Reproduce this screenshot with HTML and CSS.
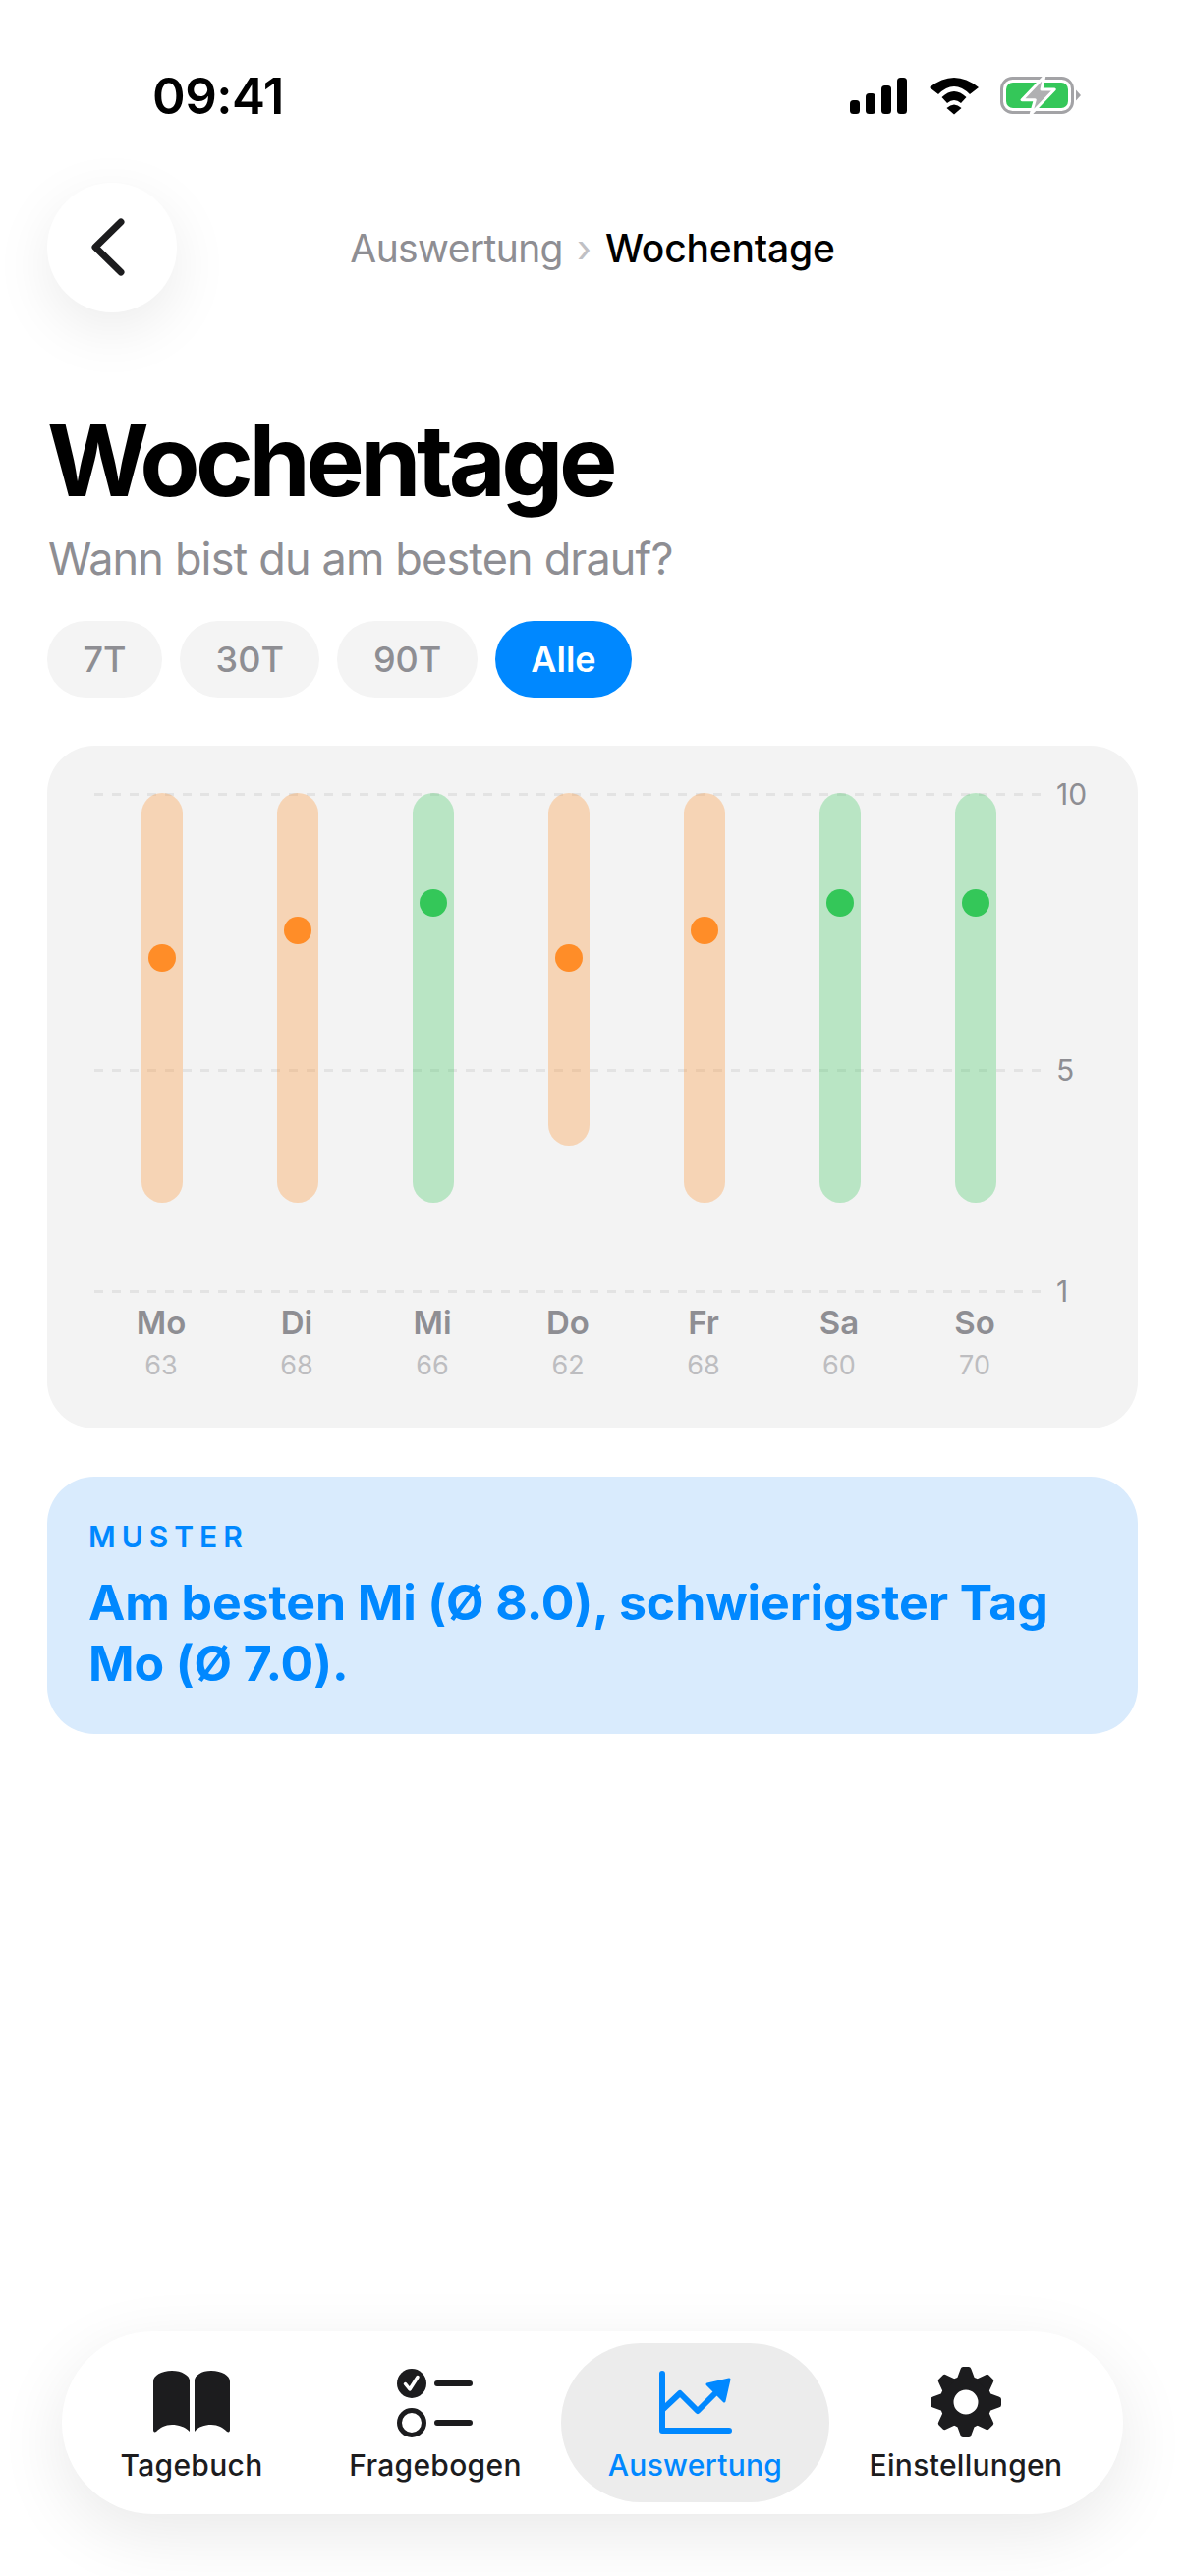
FILE: index.html
```html
<!DOCTYPE html>
<html lang="de">
<head>
    <meta charset="UTF-8">
    <meta name="viewport" content="width=device-width, initial-scale=1.0">
    <title>Wochentage</title>
    <link rel="stylesheet" href="styles.css">
</head>
<body>

<div class="status-bar">
    <span class="status-time">09:41</span>
    <div class="status-icons">
        <svg class="icon-signal" width="58" height="37" viewBox="0 0 58 37">
            <rect x="0" y="23" width="10" height="14" rx="3.5"/>
            <rect x="16" y="16" width="10" height="21" rx="3.5"/>
            <rect x="32" y="8" width="10" height="29" rx="3.5"/>
            <rect x="48" y="0" width="10" height="37" rx="3.5"/>
        </svg>
        <svg class="icon-wifi" width="50" height="38" viewBox="0 0 50 38">
            <path d="M0 10Q25 -10 50 10L41 17Q25 1 9 17Z"/>
            <path d="M12.5 20Q25 8 37.5 20L32 26Q25 20 18 26Z"/>
            <path d="M17.5 31Q25 24 32.5 31L25 37.5Z"/>
        </svg>
        <svg class="icon-battery" width="86" height="44" viewBox="0 0 86 44">
            <rect x="3.5" y="4.5" width="72" height="35" rx="11" fill="none" stroke="#a3a3a6" stroke-width="3"/>
            <rect x="8" y="9" width="63" height="26" rx="7" fill="#34c759"/>
            <path d="M79 16.5L84 22L79 27.5Z" fill="#a3a3a6"/>
            <path d="M46.7 3L24 26.7H37.3L33.3 41L57.3 16H44Z" fill="#b0b0b2" stroke="#fff" stroke-width="3" stroke-linejoin="round"/>
        </svg>
    </div>
</div>

<div class="nav">
    <button type="button" class="back-button">
        <svg width="44" height="70" viewBox="0 0 44 70">
            <path d="M35 9L9 34.5L35 60" fill="none" stroke="#1c1c1e" stroke-width="7" stroke-linecap="round" stroke-linejoin="round"/>
        </svg>
    </button>
    <div class="breadcrumb">
        <span class="crumb-parent">Auswertung</span>
        <span class="crumb-sep">›</span>
        <span class="crumb-current">Wochentage</span>
    </div>
</div>

<main class="content">
    <h1>Wochentage</h1>
    <p class="subtitle">Wann bist du am besten drauf?</p>

    <div class="chips">
        <span class="chip">7T</span>
        <span class="chip">30T</span>
        <span class="chip">90T</span>
        <span class="chip chip-active">Alle</span>
    </div>

    <section class="chart-card">
        <div class="plot">
            <!-- grid lines -->
            <div class="grid-line" style="top: 0"><span>10</span></div>
            <div class="grid-line" style="top: 281px"><span>5</span></div>
            <div class="grid-line" style="top: 506px"><span>1</span></div>

            <div class="bars">
                <div class="bar-col"><div class="bar bar-orange" style="height: 417px"><i class="dot" style="top: 154px"></i></div></div>
                <div class="bar-col"><div class="bar bar-orange" style="height: 417px"><i class="dot" style="top: 126px"></i></div></div>
                <div class="bar-col"><div class="bar bar-green" style="height: 417px"><i class="dot" style="top: 98px"></i></div></div>
                <div class="bar-col"><div class="bar bar-orange" style="height: 359px"><i class="dot" style="top: 154px"></i></div></div>
                <div class="bar-col"><div class="bar bar-orange" style="height: 417px"><i class="dot" style="top: 126px"></i></div></div>
                <div class="bar-col"><div class="bar bar-green" style="height: 417px"><i class="dot" style="top: 98px"></i></div></div>
                <div class="bar-col"><div class="bar bar-green" style="height: 417px"><i class="dot" style="top: 98px"></i></div></div>
            </div>
        </div>

        <div class="days">
            <div class="day"><b>Mo</b><span>63</span></div>
            <div class="day"><b>Di</b><span>68</span></div>
            <div class="day"><b>Mi</b><span>66</span></div>
            <div class="day"><b>Do</b><span>62</span></div>
            <div class="day"><b>Fr</b><span>68</span></div>
            <div class="day"><b>Sa</b><span>60</span></div>
            <div class="day"><b>So</b><span>70</span></div>
        </div>
    </section>

    <section class="pattern-card">
        <div class="pattern-label">MUSTER</div>
        <div class="pattern-text">Am besten Mi (Ø 8.0), schwierigster Tag Mo (Ø 7.0).</div>
    </section>
</main>

<nav class="tab-bar">
    <div class="tab">
        <svg width="80" height="70" viewBox="0 0 80 70" fill="#1c1c1e">
            <path d="M1 12C1 6 9 1 20 1C30 1 38 6 38 11V63C33 58 27 56 20 56C13 56 8 59 4 63C2 64 1 63 1 61Z"/>
            <path d="M79 12C79 6 71 1 60 1C50 1 43 6 43 11V63C47 58 53 56 60 56C67 56 72 59 76 63C78 64 79 63 79 61Z"/>
        </svg>
        <span>Tagebuch</span>
    </div>
    <div class="tab">
        <svg width="82" height="74" viewBox="0 -1 82 74">
            <circle cx="17" cy="17" r="15" fill="#1c1c1e"/>
            <path d="M10.5 17.5L15 23L23 10.5" fill="none" stroke="#fff" stroke-width="3.5" stroke-linecap="round" stroke-linejoin="round"/>
            <circle cx="17" cy="57" r="12.5" fill="none" stroke="#1c1c1e" stroke-width="5"/>
            <path d="M43 17H76M43 57H76" stroke="#1c1c1e" stroke-width="6" stroke-linecap="round"/>
        </svg>
        <span>Fragebogen</span>
    </div>
    <div class="tab tab-active">
        <svg width="82" height="72" viewBox="0 0 82 72">
            <path d="M7 6V64H75" fill="none" stroke="#0088ff" stroke-width="6" stroke-linecap="round" stroke-linejoin="round"/>
            <path d="M7 43L25 26L43 44L65 22" fill="none" stroke="#0088ff" stroke-width="6" stroke-linejoin="round"/>
            <path d="M75 12L53 17L70 34Z" fill="#0088ff" stroke="#0088ff" stroke-width="3" stroke-linejoin="round"/>
        </svg>
        <span>Auswertung</span>
    </div>
    <div class="tab">
        <svg width="74" height="74" viewBox="-37 -37 74 74" fill="#1c1c1e">
            <defs>
                <path id="tooth" d="M-9 -24L-5.5 -33.5Q-5 -36 -3 -36H3Q5 -36 5.5 -33.5L9 -24Z"/>
            </defs>
            <circle r="19.5" fill="none" stroke="#1c1c1e" stroke-width="14"/>
            <use href="#tooth"/>
            <use href="#tooth" transform="rotate(45)"/>
            <use href="#tooth" transform="rotate(90)"/>
            <use href="#tooth" transform="rotate(135)"/>
            <use href="#tooth" transform="rotate(180)"/>
            <use href="#tooth" transform="rotate(225)"/>
            <use href="#tooth" transform="rotate(270)"/>
            <use href="#tooth" transform="rotate(315)"/>
        </svg>
        <span>Einstellungen</span>
    </div>
</nav>

</body>
</html>
```

FILE: styles.css
```css
html, body {
    height: 100%;
    margin: 0;
    padding: 0;
}

body {
    display: flex;
    flex-direction: column;
    background-color: #fff;
    font-family: Inter, "Noto Sans", sans-serif;
    color: #000;
    overflow: hidden;
}

.status-bar {
    height: 186px;
    flex: none;
    display: flex;
    justify-content: space-between;
    padding: 69px 104px 0 155px;
    box-sizing: border-box;
}

.status-time {
    font-size: 51px;
    font-weight: 600;
    line-height: 58px;
    letter-spacing: -0.5px;
}

.status-icons {
    display: flex;
    align-items: flex-start;
    padding-top: 10px;
}

.icon-signal {
    margin-right: 23px;
}

.icon-wifi {
    margin-right: 20px;
}

.icon-battery {
    margin-top: -4px;
}

.nav {
    flex: none;
    height: 132px;
    padding: 0 48px;
    display: flex;
    align-items: center;
}

.back-button {
    width: 132px;
    height: 132px;
    padding: 0;
    border: none;
    border-radius: 50%;
    background-color: #fff;
    box-shadow: 0 18px 60px rgba(0, 0, 0, 0.08);
    display: flex;
    align-items: center;
    justify-content: flex-start;
    padding-left: 40px;
    box-sizing: border-box;
}

.breadcrumb {
    flex: 1;
    margin-right: 132px;
    display: flex;
    justify-content: center;
    align-items: baseline;
    font-size: 39px;
}

.crumb-parent {
    color: #8e8e93;
    letter-spacing: -0.6px;
}

.crumb-sep {
    color: #c0c0c4;
    margin: 0 14px;
}

.crumb-current {
    font-weight: 500;
    letter-spacing: -0.2px;
}

.content {
    flex: 1;
    padding: 0 48px;
}

h1 {
    margin: 90px 0 0;
    font-size: 100px;
    line-height: 122px;
    font-weight: 700;
    letter-spacing: -4.5px;
}

.subtitle {
    margin: 12px 0 0 1px;
    font-size: 45px;
    line-height: 54px;
    letter-spacing: -0.85px;
    color: #8e8e93;
}

.chips {
    display: flex;
    gap: 18px;
    margin-top: 36px;
}

.chip {
    height: 78px;
    line-height: 78px;
    padding: 0 36.5px;
    border-radius: 39px;
    background-color: #f4f4f4;
    color: #8e8e93;
    font-size: 36px;
    font-weight: 500;
}

.chip-active {
    background-color: #0088ff;
    color: #fff;
    font-weight: 600;
}

.chart-card {
    margin-top: 49px;
    height: 695px;
    box-sizing: border-box;
    padding: 48px 0 0 48px;
    border-radius: 48px;
    background-color: #f3f3f3;
}

.plot {
    position: relative;
    height: 507px;
    width: 966px;
}

.grid-line {
    position: absolute;
    left: 0;
    right: 3px;
    height: 3px;
    background-image: repeating-linear-gradient(to right, #e3e3e3 0, #e3e3e3 9px, transparent 9px, transparent 18px);
}

.grid-line span {
    position: absolute;
    left: 979px;
    top: -18px;
    font-size: 30px;
    line-height: 38px;
    color: #8e8e93;
}

.bars {
    position: relative;
    display: grid;
    grid-template-columns: repeat(7, 1fr);
}

.bar-col {
    display: flex;
    justify-content: center;
}

.bar {
    position: relative;
    width: 42px;
    border-radius: 21px;
}

.bar-orange {
    background-color: rgba(255, 141, 40, 0.3);
}

.bar-green {
    background-color: rgba(52, 199, 89, 0.3);
}

.dot {
    position: absolute;
    left: 7px;
    width: 28px;
    height: 28px;
    border-radius: 50%;
}

.bar-orange .dot {
    background-color: #ff8d28;
}

.bar-green .dot {
    background-color: #34c759;
}

.days {
    display: grid;
    grid-template-columns: repeat(7, 138px);
    margin: 12px 0 0 -1px;
    text-align: center;
}

.day b {
    display: block;
    font-size: 33px;
    line-height: 40px;
    font-weight: 600;
    color: #8e8e93;
}

.day span {
    display: block;
    margin-top: 8px;
    font-size: 27px;
    line-height: 32px;
    color: #bdbdc0;
}

.pattern-card {
    margin-top: 49px;
    height: 262px;
    box-sizing: border-box;
    padding: 42px 42px 0;
    border-radius: 48px;
    background-color: #d9ebfd;
    color: #0088ff;
}

.pattern-label {
    font-size: 30px;
    line-height: 38px;
    font-weight: 600;
    letter-spacing: 6px;
}

.pattern-text {
    margin-top: 17px;
    font-size: 50px;
    line-height: 62px;
    font-weight: 700;
    letter-spacing: -0.1px;
}

.tab-bar {
    flex: none;
    height: 186px;
    margin: 0 63px 63px;
    box-sizing: border-box;
    padding: 12px;
    border-radius: 93px;
    background-color: #fff;
    box-shadow: 0 20px 70px rgba(0, 0, 0, 0.09);
    display: grid;
    grid-template-columns: 240px 256px 273px 278px;
}

.tab {
    display: flex;
    flex-direction: column;
    align-items: center;
    justify-content: flex-end;
    height: 162px;
    border-radius: 81px;
    color: #1c1c1e;
}

.tab svg {
    flex: none;
}

.tab span {
    font-size: 30px;
    line-height: 36px;
    font-weight: 500;
    letter-spacing: 0.3px;
    margin: 9px 0 20px;
}

.tab-active {
    background-color: #ececec;
    color: #0088ff;
}
```
